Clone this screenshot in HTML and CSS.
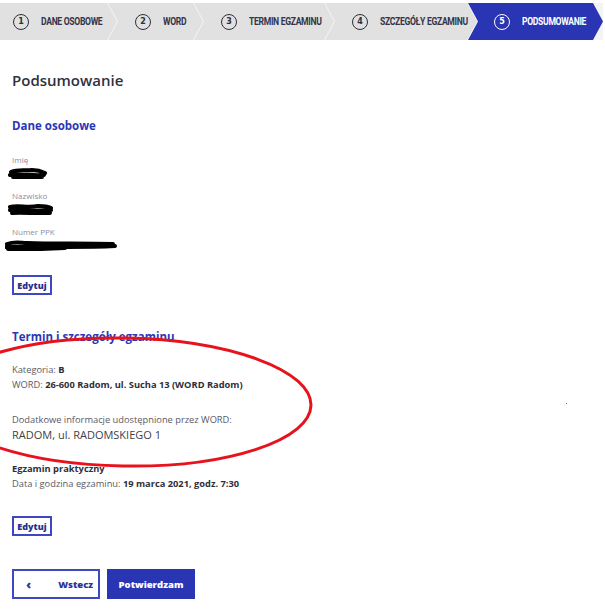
FILE: index.html
```html
<!DOCTYPE html>
<html lang="pl">
<head>
    <meta charset="UTF-8">
    <meta name="viewport" content="width=device-width, initial-scale=1.0">
    <title>Podsumowanie - Zapisy na egzamin</title>
    <link rel="stylesheet" href="styles.css">
</head>
<body>
    <nav class="steps">
        <div class="step step-first"><span class="num">1</span><span class="label">DANE OSOBOWE</span></div>
        <div class="step step-2"><span class="num">2</span><span class="label">WORD</span></div>
        <div class="step step-3"><span class="num">3</span><span class="label">TERMIN EGZAMINU</span></div>
        <div class="step step-4"><span class="num">4</span><span class="label">SZCZEGÓŁY EGZAMINU</span></div>
        <div class="step step-5 active"><span class="num">5</span><span class="label">PODSUMOWANIE</span></div>
    </nav>

    <main class="summary">
        <h1>Podsumowanie</h1>

        <section class="block">
            <h2>Dane osobowe</h2>
            <div class="field">
                <div class="field-label">Imię</div>
                <svg class="scribble" width="40" height="12" viewBox="0 0 40 12">
                    <path d="M3 5 C10 2 18 4 24 3 C30 3 35 5 37 6 M2 8 C12 6 22 9 36 8 M5 10 C14 10 24 11 34 10" />
                </svg>
            </div>
            <div class="field">
                <div class="field-label">Nazwisko</div>
                <svg class="scribble" width="46" height="12" viewBox="0 0 46 12">
                    <path d="M2 4 C10 2 20 5 30 3 C36 3 41 4 43 5 M2 7 C14 6 26 9 43 7 M4 10 C16 9 28 11 42 10" />
                </svg>
            </div>
            <div class="field">
                <div class="field-label">Numer PPK</div>
                <svg class="scribble scribble-wide" width="112" height="12" viewBox="0 0 112 12">
                    <path d="M2 5 C10 2 16 4 22 4 C50 5 80 4 108 5 M1 8 C30 7 70 9 110 7 M3 10 C20 11 40 10 60 9" />
                </svg>
            </div>
            <button class="btn-edit">Edytuj</button>
        </section>

        <section class="block">
            <h2>Termin i szczegóły egzaminu</h2>
            <p class="line">Kategoria: <b>B</b></p>
            <p class="line">WORD: <b>26-600 Radom, ul. Sucha 13 (WORD Radom)</b></p>
            <p class="line extra">Dodatkowe informacje udostępnione przez WORD:</p>
            <p class="extra-value">RADOM, ul. RADOMSKIEGO 1</p>
            <p class="line exam-title"><b>Egzamin praktyczny</b></p>
            <p class="line">Data i godzina egzaminu: <b>19 marca 2021, godz. 7:30</b></p>
            <button class="btn-edit">Edytuj</button>
        </section>

        <div class="actions">
            <button class="btn btn-back"><span class="arrow">&lsaquo;</span>Wstecz</button>
            <button class="btn btn-confirm">Potwierdzam</button>
        </div>
    </main>

    <!-- red marker annotation drawn over the page -->
    <svg class="annotation" width="605" height="609" viewBox="0 0 605 609">
        <ellipse cx="124" cy="402" rx="187" ry="64" transform="rotate(1 124 402)" />
        <rect class="dot" x="566" y="403" width="1" height="1" />
    </svg>
</body>
</html>
```

FILE: styles.css
```css
body {
    font-family: 'Open Sans', Arial, sans-serif;
    margin: 0;
    padding: 0;
    background: #fff;
    color: #333;
    position: relative;
}
/* Stepper */
.steps {
    display: flex;
    margin-top: 3px;
    height: 37px;
    background: #f4f4f4;
    width: 603px;
}
.step {
    display: flex;
    align-items: center;
    flex: none;
    height: 100%;
    padding-left: 27px;
    box-sizing: border-box;
    background: #e1e1e1;
    margin-left: -9px;
    clip-path: polygon(0 0, calc(100% - 10px) 0, 100% 50%, calc(100% - 10px) 100%, 0 100%, 10px 50%);
}
.step-first {
    margin-left: 0;
    padding-left: 13px;
    width: 117px;
    clip-path: polygon(0 0, calc(100% - 10px) 0, 100% 50%, calc(100% - 10px) 100%, 0 100%);
}
.step-2 { width: 95px; }
.step-3 { width: 140px; }
.step-4 { width: 152px; }
.step-5 { width: 135px; padding-left: 26px; }
.step .num {
    flex: none;
    width: 14px;
    height: 14px;
    border: 1.5px solid #2f2f3a;
    border-radius: 50%;
    display: flex;
    align-items: center;
    justify-content: center;
    font-family: 'DejaVu Sans', sans-serif;
    font-size: 8px;
    font-weight: bold;
    color: #2f2f3a;
    margin-right: 12px;
}
.step .label {
    font-family: 'Roboto', 'DejaVu Sans', sans-serif;
    font-weight: bold;
    font-size: 11px;
    letter-spacing: -0.4px;
    color: #34344a;
    white-space: nowrap;
    transform: scaleX(0.78);
    transform-origin: left center;
}
.step.active {
    background: #2a35b3;
}
.step.active .num {
    border-color: #fff;
    color: #fff;
}
.step.active .label {
    color: #fff;
}
/* Summary */
.summary {
    padding: 0 12px;
}
.summary h1 {
    margin: 30px 0 0 0;
    font-size: 15px;
    line-height: 20px;
    font-weight: 600;
    color: #2f3040;
}
.block h2 {
    margin: 0;
    font-size: 11.5px;
    line-height: 16px;
    font-weight: 700;
    color: #2b37b5;
}
.block:first-of-type h2 {
    margin-top: 28px;
    margin-bottom: 21px;
}
.field {
    margin-bottom: 12px;
}
.field-label {
    font-size: 8px;
    line-height: 10px;
    color: #8a8ea6;
    margin-bottom: 2px;
}
.scribble {
    display: block;
    margin-left: -4px;
}
.scribble path {
    fill: none;
    stroke: #000;
    stroke-width: 4;
    stroke-linecap: round;
}
.scribble-wide {
    margin-left: -7px;
}
.btn-edit {
    display: block;
    font-family: 'Open Sans', Arial, sans-serif;
    font-size: 9px;
    font-weight: 800;
    color: #26308f;
    background: #fff;
    border: 2px solid #3c48c2;
    width: 40px;
    height: 20px;
    padding: 0;
    margin-top: 24px;
}
.block + .block h2 {
    margin-top: 34px;
    margin-bottom: 17px;
}
.line {
    margin: 0;
    font-size: 9.3px;
    line-height: 15px;
    color: #5a5a66;
}
.line b {
    color: #2f2f3a;
    font-weight: 700;
}
.extra {
    margin-top: 20px;
}
.extra-value {
    margin: 0;
    font-size: 11px;
    line-height: 16px;
    color: #3f3f48;
}
.exam-title {
    margin-top: 18px;
}
.block + .block .btn-edit {
    margin-top: 25px;
}
.actions {
    display: flex;
    gap: 7px;
    margin-top: 33px;
}
.btn {
    font-family: 'Open Sans', Arial, sans-serif;
    font-size: 9.5px;
    font-weight: 800;
    height: 30px;
    width: 88px;
    padding: 0;
}
.btn-back {
    background: #fff;
    color: #2a3599;
    border: 2px solid #3c48c2;
    display: flex;
    align-items: center;
    padding-left: 12px;
}
.btn-back .arrow {
    font-size: 13px;
    margin-right: 27px;
}
.btn-confirm {
    background: #2a35b3;
    color: #fff;
    border: none;
}
/* Marker over the screenshot */
.annotation {
    position: absolute;
    top: 0;
    left: 0;
    pointer-events: none;
}
.annotation ellipse {
    fill: none;
    stroke: #e8121c;
    stroke-width: 3;
}
.annotation .dot {
    fill: #777;
}
```
